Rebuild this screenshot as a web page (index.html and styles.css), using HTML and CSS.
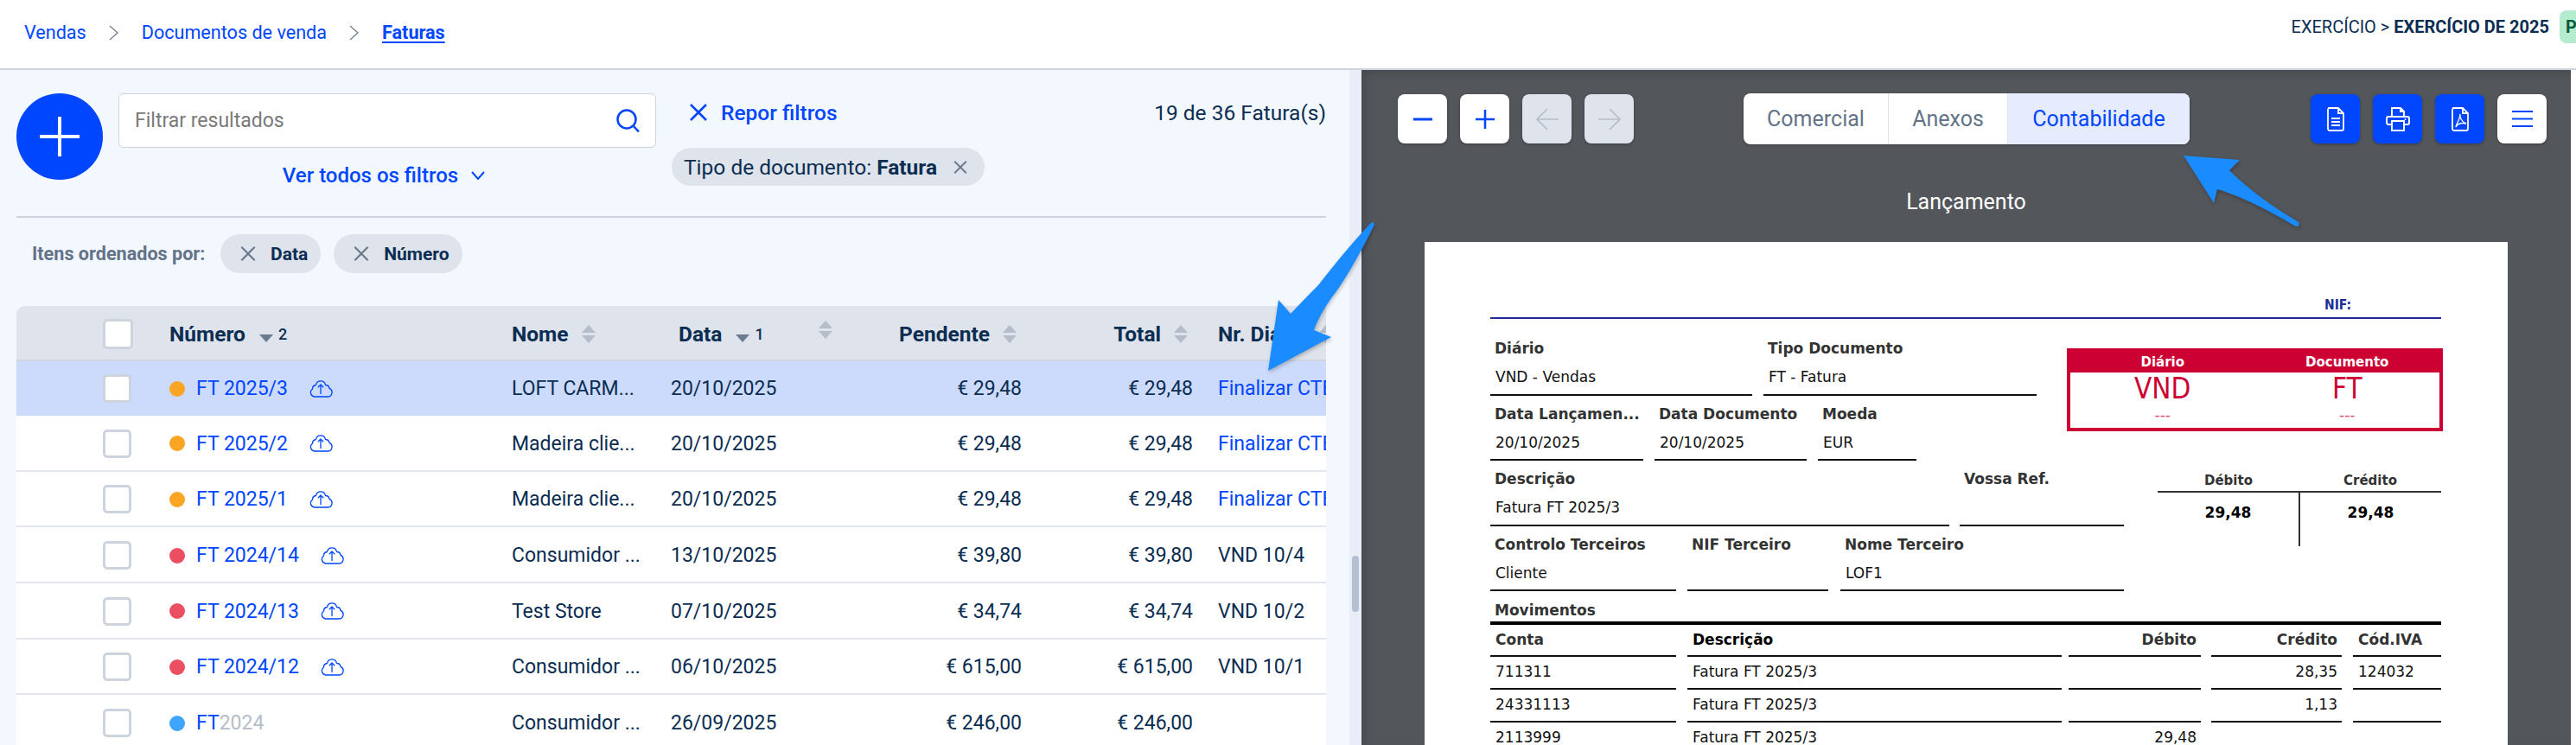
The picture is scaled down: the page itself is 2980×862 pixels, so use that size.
FILE: index.html
```html
<!DOCTYPE html>
<html lang="pt">
<head>
<meta charset="utf-8">
<title>Faturas</title>
<link rel="stylesheet" href="styles.css">
</head>
<body>
<svg width="0" height="0" class="defs">
  <symbol id="cloud" viewBox="0 0 28 20"><path d="M6.500 19H22a5 5 0 0 0 2-9.600a4.500 4.500 0 0 0-4.500-3.900A5.600 5.600 0 0 0 8.500 5.500a4.500 4.500 0 0 0-4 4.500a5 5 0 0 0 2 9zM14 16V5M10.800 8.200L14 5l3.200 3.200" fill="none" stroke="currentColor" stroke-width="1.300" stroke-linejoin="round"/></symbol>
  <symbol id="x" viewBox="0 0 20 20"><path d="M1 1l18 18M19 1L1 19" fill="none" stroke="currentColor" stroke-width="2.500"/></symbol>
</svg>

<header class="topbar">
  <nav class="crumbs">
    <a>Vendas</a>
    <svg class="crumb-sep" viewBox="0 0 11 18"><path d="M1 1l9 8-9 8" fill="none" stroke="#71808f" stroke-width="1.300"/></svg>
    <a>Documentos de venda</a>
    <svg class="crumb-sep" viewBox="0 0 11 18"><path d="M1 1l9 8-9 8" fill="none" stroke="#71808f" stroke-width="1.300"/></svg>
    <a class="crumb-current">Faturas</a>
  </nav>
  <div class="period">
    <span>EXERCÍCIO &gt; <b>EXERCÍCIO DE 2025</b></span>
    <span class="badge">P</span>
  </div>
</header>

<main class="main">
  <section class="list">
    <div class="filters">
      <button class="add"><svg viewBox="0 0 46 46"><path d="M23 0v46M0 23h46" stroke="#fff" stroke-width="4"/></svg></button>
      <div class="search-col">
        <div class="search">
          <span>Filtrar resultados</span>
          <svg viewBox="0 0 28 27"><circle cx="12" cy="12" r="10.500" fill="none" stroke="#0046ff" stroke-width="2.500"/><path d="M19.500 19.500l6.500 7" stroke="#0046ff" stroke-width="2.500"/></svg>
        </div>
        <a class="all-filters">Ver todos os filtros <svg viewBox="0 0 16 10"><path d="M1 1l7 8 7-8" fill="none" stroke="#0046ff" stroke-width="2"/></svg></a>
      </div>
      <div class="filter-side">
        <div class="filter-top">
          <a class="reset"><svg class="reset-x"><use href="#x"/></svg>Repor filtros</a>
          <span class="count">19 de 36 Fatura(s)</span>
        </div>
        <span class="chip chip-filter">Tipo de documento:&nbsp;<b>Fatura</b><svg class="chip-x-small"><use href="#x"/></svg></span>
      </div>
    </div>

    <div class="sort-row">
      <span class="sort-label">Itens ordenados por:</span>
      <span class="chip chip-sort"><svg class="chip-x"><use href="#x"/></svg><b>Data</b></span>
      <span class="chip chip-sort"><svg class="chip-x"><use href="#x"/></svg><b>Número</b></span>
    </div>

    <div class="table">
      <div class="row head">
        <div class="c-check"><span class="check check-head"></span></div>
        <div class="c-num"><b>Número</b><i class="tri-down sort-first"></i><small>2</small></div>
        <div class="c-name"><b>Nome</b><i class="sorter"></i></div>
        <div class="c-date head-date"><b>Data</b><i class="tri-down sort-first"></i><small>1</small></div>
        <div class="c-pend head-pend"><i class="sorter sorter-up"></i><span class="head-end"><b>Pendente</b><i class="sorter"></i></span></div>
        <div class="c-total head-end"><b>Total</b><i class="sorter"></i></div>
        <div class="c-diary head-diary"><b>Nr. Diário</b><i class="sorter"></i></div>
      </div>

      <div class="row first selected">
        <div class="c-check"><span class="check"></span></div>
        <div class="c-num"><i class="dot orange"></i><a>FT 2025/3</a><svg class="cloud"><use href="#cloud"/></svg></div>
        <div class="c-name">LOFT CARM...</div><div class="c-date">20/10/2025</div>
        <div class="c-pend">€ 29,48</div><div class="c-total">€ 29,48</div>
        <div class="c-diary"><a>Finalizar CTB</a></div>
      </div>
      <div class="row">
        <div class="c-check"><span class="check"></span></div>
        <div class="c-num"><i class="dot orange"></i><a>FT 2025/2</a><svg class="cloud"><use href="#cloud"/></svg></div>
        <div class="c-name">Madeira clie...</div><div class="c-date">20/10/2025</div>
        <div class="c-pend">€ 29,48</div><div class="c-total">€ 29,48</div>
        <div class="c-diary"><a>Finalizar CTB</a></div>
      </div>
      <div class="row">
        <div class="c-check"><span class="check"></span></div>
        <div class="c-num"><i class="dot orange"></i><a>FT 2025/1</a><svg class="cloud"><use href="#cloud"/></svg></div>
        <div class="c-name">Madeira clie...</div><div class="c-date">20/10/2025</div>
        <div class="c-pend">€ 29,48</div><div class="c-total">€ 29,48</div>
        <div class="c-diary"><a>Finalizar CTB</a></div>
      </div>
      <div class="row">
        <div class="c-check"><span class="check"></span></div>
        <div class="c-num"><i class="dot red"></i><a>FT 2024/14</a><svg class="cloud"><use href="#cloud"/></svg></div>
        <div class="c-name">Consumidor ...</div><div class="c-date">13/10/2025</div>
        <div class="c-pend">€ 39,80</div><div class="c-total">€ 39,80</div>
        <div class="c-diary">VND 10/4</div>
      </div>
      <div class="row">
        <div class="c-check"><span class="check"></span></div>
        <div class="c-num"><i class="dot red"></i><a>FT 2024/13</a><svg class="cloud"><use href="#cloud"/></svg></div>
        <div class="c-name">Test Store</div><div class="c-date">07/10/2025</div>
        <div class="c-pend">€ 34,74</div><div class="c-total">€ 34,74</div>
        <div class="c-diary">VND 10/2</div>
      </div>
      <div class="row">
        <div class="c-check"><span class="check"></span></div>
        <div class="c-num"><i class="dot red"></i><a>FT 2024/12</a><svg class="cloud"><use href="#cloud"/></svg></div>
        <div class="c-name">Consumidor ...</div><div class="c-date">06/10/2025</div>
        <div class="c-pend">€ 615,00</div><div class="c-total">€ 615,00</div>
        <div class="c-diary">VND 10/1</div>
      </div>
      <div class="row">
        <div class="c-check"><span class="check"></span></div>
        <div class="c-num"><i class="dot blue"></i><a>FT</a><span class="muted">2024</span></div>
        <div class="c-name">Consumidor ...</div><div class="c-date">26/09/2025</div>
        <div class="c-pend">€ 246,00</div><div class="c-total">€ 246,00</div>
        <div class="c-diary"></div>
      </div>
    </div>
  </section>

  <div class="gutter"><span class="thumb"></span></div>

  <section class="viewer">
    <div class="viewer-bar">
      <div class="btns">
        <button class="btn"><svg viewBox="0 0 22 22"><path d="M0 11h22" stroke="#0046ff" stroke-width="3"/></svg></button>
        <button class="btn"><svg viewBox="0 0 22 22"><path d="M0 11h22M11 0v22" stroke="#0046ff" stroke-width="2.500"/></svg></button>
        <button class="btn btn-off"><svg class="nav-ic" viewBox="0 0 26 26"><path d="M13 1L1 13l12 12M1 13h25" fill="none" stroke="#b5bdca" stroke-width="1.600"/></svg></button>
        <button class="btn btn-off"><svg class="nav-ic" viewBox="0 0 26 26"><path d="M13 1l12 12-12 12M25 13H0" fill="none" stroke="#b5bdca" stroke-width="1.600"/></svg></button>
      </div>
      <div class="tabs">
        <span class="tab tab-a">Comercial</span>
        <span class="tab tab-b">Anexos</span>
        <span class="tab tab-c">Contabilidade</span>
      </div>
      <div class="btns btns-right">
        <button class="btn btn-blue"><svg class="tool-ic" viewBox="0 0 28 28"><path d="M5 1h12l6 6v18a2 2 0 0 1-2 2H7a2 2 0 0 1-2-2V3a2 2 0 0 1 2-2zM17 1v6h6M9 13h10M9 17h10M9 21h10" fill="none" stroke="#fff" stroke-width="1.800"/></svg></button>
        <button class="btn btn-blue"><svg class="tool-ic" viewBox="0 0 28 28"><path d="M7 11V1h10l4 4v6M17 1v4h4M7 20H3a2 2 0 0 1-2-2v-5a2 2 0 0 1 2-2h22a2 2 0 0 1 2 2v5a2 2 0 0 1-2 2h-4M7 16h14v11H7z" fill="none" stroke="#fff" stroke-width="1.900"/><circle cx="22.500" cy="14" r="1" fill="#fff"/></svg></button>
        <button class="btn btn-blue"><svg class="tool-ic" viewBox="0 0 28 28"><path d="M5 1h12l6 6v18a2 2 0 0 1-2 2H7a2 2 0 0 1-2-2V3a2 2 0 0 1 2-2zM17 1v6h6" fill="none" stroke="#fff" stroke-width="1.800"/><path d="M14 8c-1 4 2 9 7 11c-5-1-10 0-12 4c0-3 5-9 5-15z" fill="none" stroke="#fff" stroke-width="1.400"/></svg></button>
        <button class="btn"><svg class="menu-ic" viewBox="0 0 24 19"><path d="M0 1h24M0 9.500h24M0 18h24" stroke="#0046ff" stroke-width="2"/></svg></button>
      </div>
    </div>
    <h2 class="doc-title">Lançamento</h2>

    <article class="paper">
      <div class="paper-head"><span class="nif">NIF:</span></div>

      <div class="band">
        <div class="band-left">
          <div class="fields">
            <div class="field w303"><label>Diário</label><p>VND - Vendas</p></div>
            <div class="field w316 ml13"><label>Tipo Documento</label><p>FT - Fatura</p></div>
          </div>
          <div class="fields">
            <div class="field w177"><label>Data Lançamen...</label><p>20/10/2025</p></div>
            <div class="field w176 ml13"><label>Data Documento</label><p>20/10/2025</p></div>
            <div class="field w114 ml13"><label>Moeda</label><p>EUR</p></div>
          </div>
        </div>
        <div class="stamp">
          <div class="stamp-head"><span>Diário</span><span>Documento</span></div>
          <div class="stamp-body">
            <div><strong>VND</strong><em>---</em></div>
            <div><strong>FT</strong><em>---</em></div>
          </div>
        </div>
      </div>

      <div class="band">
        <div class="band-left band-left-wide">
          <div class="fields">
            <div class="field w531"><label>Descrição</label><p>Fatura FT 2025/3</p></div>
            <div class="field w190 ml12"><label>Vossa Ref.</label><p>&nbsp;</p></div>
          </div>
          <div class="fields">
            <div class="field w215"><label>Controlo Terceiros</label><p>Cliente</p></div>
            <div class="field w163 ml13"><label>NIF Terceiro</label><p>&nbsp;</p></div>
            <div class="field w328 ml14"><label>Nome Terceiro</label><p>LOF1</p></div>
          </div>
        </div>
        <div class="totals">
          <div class="totals-head"><span>Débito</span><span>Crédito</span></div>
          <div class="totals-body"><span class="t-left">29,48</span><span>29,48</span></div>
        </div>
      </div>

      <h3 class="moves-title">Movimentos</h3>
      <div class="moves">
        <div class="mrow mhead">
          <span class="m1">Conta</span><span class="m2 dark">Descrição</span><span class="m3 num">Débito</span><span class="m4 num">Crédito</span><span class="m5">Cód.IVA</span>
        </div>
        <div class="mrow">
          <span class="m1">711311</span><span class="m2">Fatura FT 2025/3</span><span class="m3 num"></span><span class="m4 num">28,35</span><span class="m5">124032</span>
        </div>
        <div class="mrow">
          <span class="m1">24331113</span><span class="m2">Fatura FT 2025/3</span><span class="m3 num"></span><span class="m4 num">1,13</span><span class="m5"></span>
        </div>
        <div class="mrow">
          <span class="m1">2113999</span><span class="m2">Fatura FT 2025/3</span><span class="m3 num">29,48</span><span class="m4 num"></span><span class="m5"></span>
        </div>
      </div>
    </article>
  </section>
  <div class="edge"></div>
</main>

<svg class="callouts" viewBox="0 0 2980 862">
  <path d="M1586 258Q1589 255 1590 260Q1560 320 1540 345Q1526 365 1520 382L1540 390L1467 429L1479 347L1493 363Q1510 345 1525 330Q1560 285 1586 258z"/>
  <path d="M2526 180L2591 185L2579 197Q2610 228 2659 257Q2661 262 2656 262Q2610 235 2580 224Q2570 220 2565 219L2561 235z"/>
</svg>
</body>
</html>
```

FILE: styles.css
```css
* { box-sizing: border-box; }
html, body { margin: 0; padding: 0; }
body {
  width: 2980px;
  height: 862px;
  overflow: hidden;
  position: relative;
  font-family: Roboto, "Liberation Sans", sans-serif;
  font-size: 23px;
  color: #0b2d52;
  background: #fff;
}
.defs { position: absolute; }
button { border: 0; padding: 0; font: inherit; }
a { color: #0046ff; }
b { font-weight: 500; }
i { font-style: normal; display: block; }

/* top bar */
.topbar {
  height: 81px;
  border-bottom: 2px solid #cdd3df;
  display: flex;
  align-items: flex-start;
  justify-content: space-between;
  overflow: hidden;
}
.crumbs {
  display: flex;
  align-items: center;
  height: 74px;
  padding-left: 28px;
  font-size: 21.600px;
}
.crumb-sep { width: 11px; height: 18px; margin: 2px 27px 0 26px; }
.crumb-current { font-weight: 700; text-decoration: underline; text-underline-offset: 3px; }
.period {
  display: flex;
  align-items: center;
  padding-top: 12px;
  font-size: 20px;
  color: #0b2d52;
  margin-right: -20px;
}
.period b { font-weight: 700; }
.badge {
  margin-left: 12px;
  width: 39px;
  height: 38px;
  line-height: 38px;
  padding-left: 7px;
  border-radius: 8px;
  background: #b5ecd0;
  color: #0c5a3a;
  font-weight: 700;
}

/* layout */
.main { display: flex; height: 781px; }
.list { width: 1561px; flex: none; background: #f3f7fe; padding: 0 27px 0 19px; overflow: hidden; }
.gutter { width: 14px; flex: none; background: #e8edf7; padding: 562px 0 0 3px; }
.thumb { display: block; width: 8px; height: 65px; border-radius: 4px; background: #b5bfd0; }
.viewer {
  width: 1399px;
  flex: none;
  background: #53565a;
  box-shadow: inset 5px 5px 10px rgba(0,0,0,.12);
  overflow: hidden;
  padding: 28px 28px 0 42px;
}
.edge { flex: 1; background: #fff; }

/* filters */
.filters { display: flex; height: 171px; padding-top: 27px; border-bottom: 2px solid #cdd3df; }
.add {
  width: 100px; height: 100px; border-radius: 50%;
  background: #0046ff;
  display: flex; align-items: center; justify-content: center;
  flex: none;
}
.add svg { width: 46px; height: 46px; }
.search-col { width: 622px; margin-left: 18px; flex: none; text-align: center; }
.search {
  height: 63px;
  background: #fff;
  border: 1.500px solid #cfd3da;
  border-radius: 6px;
  display: flex;
  align-items: center;
  justify-content: space-between;
  padding: 0 17px 0 18px;
  font-size: 23px;
  color: #7a7a7a;
}
.search svg { width: 28px; height: 27px; }
.all-filters {
  display: inline-flex;
  align-items: center;
  margin: 18px 8px 0 0;
  font-weight: 500;
  font-size: 24px;
  line-height: 28px;
}
.all-filters svg { width: 16px; height: 10px; margin-left: 15px; }
.filter-side { flex: 1; margin-left: 18px; }
.filter-top { display: flex; justify-content: space-between; align-items: center; height: 44px; padding-left: 20px; }
.reset { display: flex; align-items: center; font-weight: 500; font-size: 24.500px; }
.reset-x { width: 22px; height: 20px; margin-right: 15px; color: #0046ff; }
.count { font-size: 24.500px; }
.chip { display: inline-flex; align-items: center; height: 45px; border-radius: 23px; background: #dfe3eb; white-space: nowrap; }
.chip-filter { margin-top: 19px; padding: 0 20px 0 14px; font-size: 24.500px; height: 44px; }
.chip-filter b { font-weight: 700; }
.chip-x-small { width: 16px; height: 15px; margin-left: 19px; color: #6a788c; }
.sort-row { display: flex; align-items: center; padding: 19px 0 0 18px; gap: 15px; }
.sort-label { font-size: 21.600px; font-weight: 700; color: #637388; width: 203px; white-space: nowrap; }
.chip-sort { padding: 0 15px 0 22px; font-size: 21px; }
.chip-x { width: 20px; height: 17px; margin-right: 16px; color: #6a788c; }
.chip-sort b { font-weight: 700; }

/* table */
.table { margin-top: 38px; width: 1515px; border-radius: 10px 0 0 0; overflow: hidden; }
.row {
  display: grid;
  grid-template-columns: 177px 396px 184px 124px 282px 198px 154px;
  height: 64.670px;
  padding-top: 2px;
  background: #fff;
  border-bottom: 2px solid #e3e6ec;
  align-items: center;
  white-space: nowrap;
}
.row > div { display: flex; align-items: center; }
.head { height: 64px; background: #dfe3eb; border-bottom: 2px solid #d0d5de; }
.first { height: 63px; }
.selected { background: #ccdafc; border-bottom-color: #ccdafc; }
.head b { font-weight: 700; font-size: 24.500px; }
.head small { font-size: 18px; font-weight: 500; margin-left: 6px; }
.c-check { padding-left: 100px; }
.check { display: block; width: 33px; height: 33px; background: #fff; border: 3px solid #ced4dd; border-radius: 5px; }
.check-head { width: 35px; height: 35px; }
.c-pend, .c-total { justify-content: flex-end; }
.head .c-pend { justify-content: space-between; padding: 0 6px 0 47px; }
.head .c-total { padding-right: 6px; }
.head-end { display: flex; align-items: center; justify-content: flex-end; }
.head-date { padding-left: 9px; overflow: visible; }
.c-diary { padding-left: 29px; overflow: hidden; }
.head-diary { justify-content: space-between; padding-right: 0; }
.dot { width: 18px; height: 18px; border-radius: 50%; margin-right: 13px; }
.orange { background: #fba524; }
.red { background: #ec4e62; }
.blue { background: #3fa5ff; }
.muted { color: #b5bdca; }
.cloud { width: 28px; height: 20px; margin: 0 0 0 24px; color: #0046ff; }
.sorter { width: 16px; height: 21px; margin-left: 15px; position: relative; }
.sorter::before, .sorter::after {
  content: "";
  position: absolute;
  left: 0;
  border-left: 8px solid transparent;
  border-right: 8px solid transparent;
}
.sorter::before { top: 0; border-bottom: 9px solid #b5bdca; }
.sorter::after { bottom: 0; border-top: 9px solid #b5bdca; }
.sorter-up { margin: 0 0 10px 0; }
.tri-down {
  width: 0; height: 0;
  margin: 10px 0 0 16px;
  border-left: 8px solid transparent;
  border-right: 8px solid transparent;
  border-top: 9px solid #6b7a8f;
}

/* viewer */
.viewer-bar { display: flex; align-items: flex-start; }
.btns { display: flex; gap: 15px; }
.btns-right { margin-left: auto; }
.btn {
  width: 57px; height: 57px;
  background: #fff;
  border-radius: 8px;
  display: flex; align-items: center; justify-content: center;
  box-shadow: 0 1px 3px rgba(0,0,0,.3);
}
.btn svg { width: 22px; height: 22px; }
.btn .nav-ic { width: 26px; height: 26px; }
.btn .tool-ic { width: 28px; height: 28px; }
.btn .menu-ic { width: 24px; height: 19px; }
.btn-off { background: #dfe3eb; }
.btn-blue { background: #0046ff; }
.tabs {
  display: flex;
  margin-left: 127px;
  height: 59px;
  margin-top: -1px;
  background: #fff;
  border-radius: 8px;
  overflow: hidden;
  box-shadow: 0 1px 3px rgba(0,0,0,.3);
  font-size: 25px;
  color: #637388;
}
.tab { display: flex; align-items: center; justify-content: center; border-right: 1.500px solid #dfe3eb; }
.tab-a { width: 168px; }
.tab-b { width: 138px; }
.tab-c { width: 210px; background: #e6ecfd; color: #0046ff; border: 0; }
.doc-title { margin: 52px 14px 0 0; text-align: center; font-weight: 400; font-size: 25px; line-height: 30px; color: #fff; }

/* paper */
.paper {
  width: 1253px;
  height: 600px;
  margin: 31px 0 0 31px;
  background: #fff;
  padding: 0 77px 0 76px;
  font-family: "DejaVu Sans", sans-serif;
  font-size: 17px;
  color: #111;
}
.paper-head { height: 89px; padding: 64px 0 0 965px; border-bottom: 2px solid #1b2f96; }
.nif { display: block; width: 31px; overflow: hidden; font-family: "DejaVu Sans Condensed", "DejaVu Sans", sans-serif; font-stretch: condensed; font-weight: 700; font-size: 15.500px; line-height: 18px; color: #1b2f96; white-space: nowrap; }
.band { display: flex; justify-content: space-between; align-items: flex-start; }
.band-left { width: 632px; padding-top: 13px; }
.band-left-wide { width: 733px; padding-top: 0; }
.fields { display: flex; }
.field { padding: 5px 0 5px 5px; border-bottom: 2px solid #111; height: 75.500px; white-space: nowrap; }
.field label { display: block; font-weight: 700; line-height: 32px; color: #333; }
.field p { margin: 2px 0 0 1px; line-height: 31px; }
.w303 { width: 303px; } .w316 { width: 316px; }
.w177 { width: 177px; } .w176 { width: 176px; } .w114 { width: 114px; }
.w531 { width: 531px; } .w190 { width: 190px; }
.w215 { width: 215px; } .w163 { width: 163px; } .w328 { width: 328px; }
.ml12 { margin-left: 12px; } .ml13 { margin-left: 13px; } .ml14 { margin-left: 14px; }

.stamp { width: 435px; height: 96px; margin: 34px -2px 0 0; border: 4px solid #cc0033; text-align: center; color: #cc0033; }
.stamp-head { display: flex; height: 24px; background: #cc0033; color: #fff; font-weight: 700; font-size: 15px; line-height: 24px; }
.stamp-head span, .stamp-body > div { flex: 1; }
.stamp-body { display: flex; }
.stamp-body strong { display: block; font-family: "DejaVu Sans Condensed", "DejaVu Sans", sans-serif; font-stretch: condensed; font-weight: 400; font-size: 33px; line-height: 38px; }
.stamp-body em { display: block; font-style: normal; font-size: 17px; line-height: 20px; margin-top: 1px; color: #e0476a; }

.totals { width: 328px; margin-top: 12px; font-size: 15px; color: #333; }
.totals-head { display: flex; height: 25px; font-weight: 700; line-height: 22px; text-align: center; border-bottom: 2px solid #333; }
.totals-head span { flex: 1; }
.totals-body { display: flex; height: 62px; text-align: center; font-weight: 700; font-size: 17px; color: #000; line-height: 46px; }
.totals-body span { flex: 1; }
.totals-body .t-left { flex: none; width: 165px; border-right: 2px solid #333; }

.moves-title { height: 35px; margin: 0; padding: 6px 0 0 5px; font-size: 17px; font-weight: 700; line-height: 32px; color: #333; }
.moves { border-top: 4px solid #000; }
.mrow { display: flex; height: 38px; line-height: 34px; white-space: nowrap; }
.mrow span { display: block; height: 38px; padding: 0 5px 0 6px; border-bottom: 2px solid #111; }
.mhead { height: 37px; font-weight: 700; color: #333; }
.mhead span { height: 37px; line-height: 34px; }
.mhead .dark { color: #000; }
.m1 { width: 215px; }
.m2 { width: 433px; margin-left: 13px; }
.m3 { width: 153px; margin-left: 8px; }
.m4 { width: 151px; margin-left: 12px; }
.m5 { width: 102px; margin-left: 13px; }
.num { text-align: right; }

/* callout arrows */
.callouts { position: absolute; left: 0; top: 0; width: 2980px; height: 862px; pointer-events: none; fill: #1a8cff; filter: drop-shadow(1px 2px 2px rgba(0,0,0,.25)); }
```
